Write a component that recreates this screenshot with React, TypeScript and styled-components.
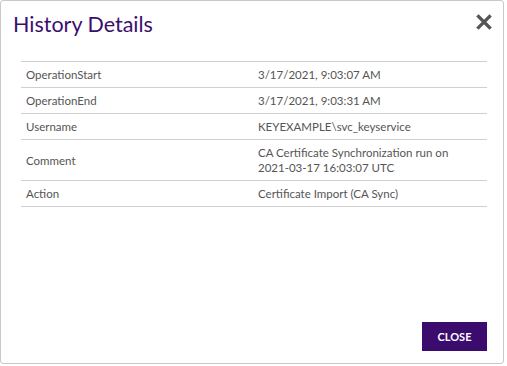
import React from "react";
import styled, { createGlobalStyle } from "styled-components";

const Global = createGlobalStyle`
  html, body { margin: 0; padding: 0; background: #fff; }
  body { font-family: Lato, "Open Sans", sans-serif; }
`;

const Dialog = styled.div`
  box-sizing: border-box;
  width: 504px;
  height: 364px;
  border: 1px solid #c9c9c9;
  border-radius: 3px;
  background: #fff;
  display: flex;
  flex-direction: column;
  padding: 0 16px 12px 20px;
`;

const Header = styled.div`
  display: flex;
  align-items: flex-start;
  justify-content: space-between;
  margin-left: -8px;
  margin-right: -5px;
  padding-top: 8px;
  height: 60px;
  box-sizing: border-box;
`;

const Title = styled.h2`
  margin: 0;
  font-family: Lato, sans-serif;
  font-weight: 400;
  font-size: 21.5px;
  line-height: 30px;
  color: #3b0e6e;
`;

const CloseIcon = styled.button`
  border: 0;
  background: none;
  padding: 0;
  margin-top: 5px;
  width: 16px;
  height: 16px;
  cursor: pointer;
  display: flex;
`;

const Table = styled.div`
  border-top: 1px solid #cfcfcf;
  display: grid;
  grid-template-columns: 232px 1fr;
`;

const Cell = styled.div`
  border-bottom: 1px solid #cfcfcf;
  padding: 5px 6px 5px 5px;
  display: flex;
  align-items: center;
  font-size: 11.5px;
  line-height: 15px;
  color: #555;
`;

const Spacer = styled.div`
  flex: 1;
`;

const Footer = styled.div`
  display: flex;
  justify-content: flex-end;
`;

const Button = styled.button`
  width: 65px;
  height: 29px;
  border: 0;
  border-radius: 0;
  background: #3b0c6e;
  color: #fff;
  font-family: Lato, sans-serif;
  font-weight: 700;
  font-size: 11px;
  cursor: pointer;
`;

const rows: [string, React.ReactNode][] = [
  ["OperationStart", "3/17/2021, 9:03:07 AM"],
  ["OperationEnd", "3/17/2021, 9:03:31 AM"],
  ["Username", "KEYEXAMPLE\\svc_keyservice"],
  [
    "Comment",
    <>
      CA Certificate Synchronization run on
      <br />
      2021-03-17 16:03:07 UTC
    </>,
  ],
  ["Action", "Certificate Import (CA Sync)"],
];

export default function App() {
  return (
    <>
      <Global />
      <Dialog>
        <Header>
          <Title>History Details</Title>
          <CloseIcon aria-label="close">
            <svg width="16" height="16" viewBox="0 0 16 16">
              <path d="M2.5 2.5 L13.5 13.5 M13.5 2.5 L2.5 13.5" stroke="#555" strokeWidth="3.2" strokeLinecap="square" />
            </svg>
          </CloseIcon>
        </Header>
        <Table>
          {rows.map(([k, v]) => (
            <React.Fragment key={k}>
              <Cell>{k}</Cell>
              <Cell>{v}</Cell>
            </React.Fragment>
          ))}
        </Table>
        <Spacer />
        <Footer>
          <Button>CLOSE</Button>
        </Footer>
      </Dialog>
    </>
  );
}
